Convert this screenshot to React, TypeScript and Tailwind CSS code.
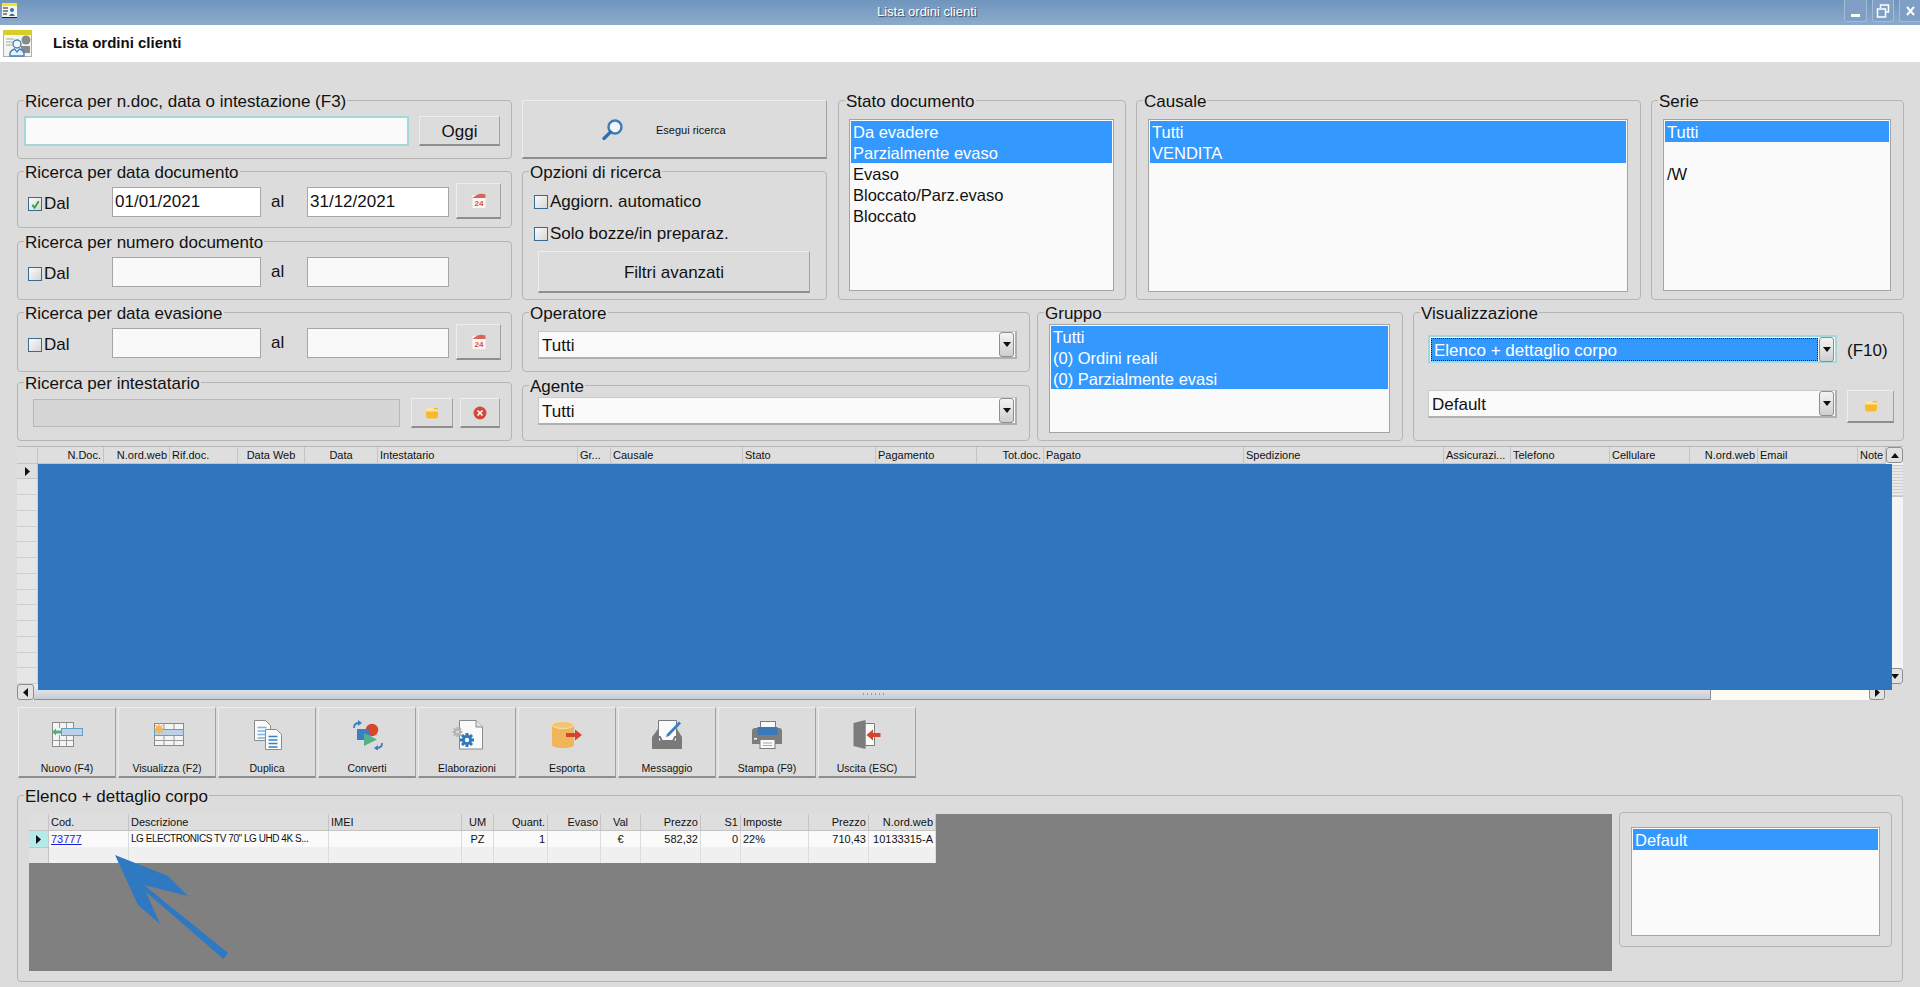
import type { ReactNode } from 'react'

const raised = 'border-t border-l border-r border-b-2 border-t-[#eeeeee] border-l-[#eeeeee] border-r-[#a2a2a2] border-b-[#8e8e8e] bg-[#dcdcdc]'

function Group({ title, className, children }: { title: string; className: string; children: ReactNode }) {
  return (
    <div className={`rounded-[4px] border border-[#b4b4b4] ${className}`}>
      <div className="-mt-[11px] ml-[6px] h-[20px] w-fit bg-[#dcdcdc] px-px text-[17px] leading-[24px]">{title}</div>
      {children}
    </div>
  )
}

function CheckBox({ checked }: { checked?: boolean }) {
  return (
    <span className="flex size-[14px] shrink-0 items-center justify-center border border-[#3b6a8f] bg-gradient-to-br from-[#fbfbfb] to-[#d6d6d6]">
      {checked && (
        <svg viewBox="0 0 12 12" className="size-[11px]">
          <path d="M2.5 6.5 L5 9.5 L9.5 2.5" fill="none" stroke="#2f9e44" strokeWidth="2" />
        </svg>
      )}
    </span>
  )
}

function CalendarIcon() {
  return (
    <svg viewBox="0 0 16 16" className="size-[16px]">
      <rect x="1.5" y="2" width="13" height="13" fill="#fdf6f2" />
      <path d="M1.5 5 Q8 -1 14.5 1.5 V5 Z" fill="#d9655a" />
      <text x="8" y="13" textAnchor="middle" fontSize="8" fontWeight="700" fill="#d9503f" fontFamily="Liberation Sans">24</text>
    </svg>
  )
}

function FolderIcon() {
  return (
    <svg viewBox="0 0 14 12" className="h-[12px] w-[14px]">
      <path d="M1 1 H13 V8.5 Q13 11.5 10 11.5 H4 Q1 11.5 1 8.5 Z" fill="#f9b92b" />
      <path d="M1 1 H8 L9.5 2.5 H13 V4.5 H1 Z" fill="#fbe6a8" />
    </svg>
  )
}

function CancelIcon() {
  return (
    <svg viewBox="0 0 14 14" className="size-[14px]">
      <circle cx="7" cy="7" r="6.5" fill="#cf4a38" />
      <path d="M4.5 4.5 L9.5 9.5 M9.5 4.5 L4.5 9.5" stroke="#fff" strokeWidth="1.6" />
    </svg>
  )
}

function SearchIcon() {
  return (
    <svg viewBox="0 0 22 21" className="h-[21px] w-[22px]">
      <circle cx="13" cy="8" r="6.5" fill="#f3f6f8" stroke="#3a7db9" strokeWidth="2.4" />
      <path d="M8.5 13 L2 19.5" stroke="#2f6ea8" strokeWidth="3.2" strokeLinecap="round" />
    </svg>
  )
}

function ListBox({ items, selected, className }: { items: string[]; selected: number; className: string }) {
  return (
    <div className={`border border-[#a4a4a4] bg-[#fafafa] p-px ${className}`}>
      {items.map((item, i) => (
        <div key={i} className={`h-[21px] pl-[2px] text-[16.5px] leading-[23px] ${i < selected ? 'bg-[#3399ff] text-white' : ''}`}>
          {item}
        </div>
      ))}
    </div>
  )
}

function Combo({ text, className }: { text: string; className: string }) {
  return (
    <div className={`flex h-[28px] items-center justify-between border border-b-2 border-r-2 border-[#b0b0b0] border-t-[#c8c8c8] border-l-[#c8c8c8] bg-[#fafafa] pl-[3px] pr-px text-[17px] ${className}`}>
      <span className="pt-[3px]">{text}</span>
      <DropButton />
    </div>
  )
}

function DropButton() {
  return (
    <span className="flex h-[25px] w-[15px] shrink-0 items-center justify-center rounded-[3px] border border-[#8e8e8e] bg-gradient-to-b from-[#f4f4f4] to-[#cfcfcf]">
      <svg viewBox="0 0 8 5" className="h-[5px] w-[8px]"><path d="M0 0 H8 L4 5 Z" fill="#111" /></svg>
    </span>
  )
}

function DateGroup({ title, className, checked, from, to, cal }: { title: string; className: string; checked?: boolean; from?: string; to?: string; cal?: boolean }) {
  const field = `mt-[6px] h-[30px] shrink-0 border border-[#a6a6a6] pl-[2px] text-[17px] leading-[28px] ${from ? 'bg-white' : 'bg-[#f9f9f9]'}`
  return (
    <Group title={title} className={className}>
      <div className="flex items-start pl-[10px]">
        <div className="mt-[16px]"><CheckBox checked={checked} /></div>
        <span className="ml-[2px] mt-[13px] w-[68px] text-[17px] leading-[20px]">Dal</span>
        <div className={`${field} w-[149px]`}>{from}</div>
        <span className="mt-[11px] w-[46px] pl-[10px] text-[17px] leading-[20px]">al</span>
        <div className={`${field} w-[142px]`}>{to}</div>
        {cal && (
          <button className={`${raised} ml-[7px] mt-[2px] flex h-[36px] w-[45px] items-center justify-center`}><CalendarIcon /></button>
        )}
      </div>
    </Group>
  )
}

function IconNuovo() {
  return (
    <svg viewBox="0 0 36 30" className="h-[30px] w-[36px]">
      <rect x="3.5" y="2.5" width="21" height="24" fill="#f4f4f4" stroke="#8a8a8a" />
      <path d="M10.5 2.5 V8 M17.5 2.5 V8 M10.5 15 V26.5 M17.5 15 V26.5 M3.5 20.5 H24.5" stroke="#9a9a9a" fill="none" />
      <rect x="12.5" y="8.5" width="21" height="7" fill="#bcd0e6" stroke="#5fa0c9" />
      <path d="M3 12 L7 8.5 V10.5 H12 V13.5 H7 V15.5 Z" fill="#55ad85" />
    </svg>
  )
}

function IconVisualizza() {
  return (
    <svg viewBox="0 0 36 30" className="h-[30px] w-[36px]">
      <rect x="5.5" y="3.5" width="29" height="22" fill="#f4f4f4" stroke="#8a8a8a" />
      <path d="M15 3.5 V9 M25 3.5 V9 M15 15 V25.5 M25 15 V25.5 M5.5 20.5 H34.5" stroke="#9a9a9a" fill="none" />
      <rect x="5.5" y="9.5" width="29" height="6" fill="#bcd0e6" stroke="#5fa0c9" />
      <circle cx="10" cy="9" r="3.2" fill="#f3c26b" />
      <path d="M10 3.5 V14.5 M4.5 9 H15.5 M6.2 5.2 L13.8 12.8 M13.8 5.2 L6.2 12.8" stroke="#f3b24d" strokeWidth="1.2" />
    </svg>
  )
}

function IconDuplica() {
  const doc = (x: number, y: number, w: number, h: number, c: string) => (
    <g>
      <path d={`M${x} ${y} H${x + w - 5} L${x + w} ${y + 5} V${y + h} H${x} Z`} fill="#fafafa" stroke="#8a8a8a" />
      <path d={`M${x + 3} ${y + 7} H${x + w - 4} M${x + 3} ${y + 10.5} H${x + w - 4} M${x + 3} ${y + 14} H${x + w - 4} M${x + 3} ${y + 17.5} H${x + w - 4}`} stroke={c} strokeWidth="1.4" />
    </g>
  )
  return (
    <svg viewBox="0 0 36 30" className="h-[30px] w-[36px]">
      {doc(5.5, 0.5, 16, 20, '#79b4e4')}
      {doc(16.5, 9.5, 16, 20, '#3f7fbe')}
    </svg>
  )
}

function IconConverti() {
  return (
    <svg viewBox="0 0 36 30" className="h-[30px] w-[36px]">
      <circle cx="23" cy="10" r="6.2" fill="#d9472b" />
      <rect x="8" y="9" width="12" height="11" fill="#3a7fc1" />
      <path d="M15 13 L28 19.5 L15 26 Z" fill="#55b08c" />
      <path d="M5 8 C5 4.5 7 3 10 3" fill="none" stroke="#3a7fc1" strokeWidth="1.8" />
      <path d="M9 0 L13 3 L9 6 Z" fill="#3a7fc1" />
      <path d="M33 23 C33 26.5 31 28 28 28" fill="none" stroke="#3a7fc1" strokeWidth="1.8" />
      <path d="M29 25 L25 28 L29 31 Z" fill="#3a7fc1" />
    </svg>
  )
}

const gearTeeth = 'M0 -7 V7 M-7 0 H7 M-5 -5 L5 5 M5 -5 L-5 5'

function IconElaborazioni() {
  return (
    <svg viewBox="0 0 36 30" className="h-[30px] w-[36px]">
      <path d="M10.5 0.5 H27 L33.5 7 V29 H10.5 Z" fill="#fafafa" stroke="#8a8a8a" />
      <path d="M27 0.5 V7 H33.5" fill="#e4e4e4" stroke="#8a8a8a" />
      <g transform="translate(8.5 12) scale(0.72)">
        <path d={gearTeeth} stroke="#b4b4b4" strokeWidth="3" />
        <circle r="4.5" fill="#b4b4b4" /><circle r="2" fill="#dcdcdc" />
      </g>
      <g transform="translate(18 20)">
        <path d={gearTeeth} stroke="#2f78bd" strokeWidth="3" />
        <circle r="5" fill="#2f78bd" /><circle r="2.2" fill="#fafafa" />
      </g>
    </svg>
  )
}

function IconEsporta() {
  return (
    <svg viewBox="0 0 36 30" className="h-[30px] w-[36px]">
      <path d="M3 5 V25 C3 29 25 29 25 25 V5 Z" fill="#f0b558" />
      <ellipse cx="14" cy="5" rx="11" ry="3.5" fill="#f3c478" stroke="#f8e0b0" />
      <path d="M17 13 H26 V9.5 L33 15 L26 20.5 V17 H17 Z" fill="#d2452e" />
    </svg>
  )
}

function IconMessaggio() {
  return (
    <svg viewBox="0 0 36 30" className="h-[30px] w-[36px]">
      <path d="M9 9 L3 17 V29 H33 V17 L28 9 Z" fill="#7a7a7a" />
      <path d="M9.5 0.5 H27.5 V21 H9.5 Z" fill="#fafafa" stroke="#7a7a7a" />
      <path d="M5.5 17 H11 L13 21 H24 L26 17 H30.5" fill="none" stroke="#7a7a7a" strokeWidth="2" />
      <path d="M18 14 L30 1.5 L32 3.5 L20 16 L17 17 Z" fill="#3a80c4" />
    </svg>
  )
}

function IconStampa() {
  return (
    <svg viewBox="0 0 36 30" className="h-[30px] w-[36px]">
      <rect x="11.5" y="1.5" width="15" height="7" fill="#fafafa" stroke="#7c7c7c" />
      <path d="M3 11 Q3 8 6 8 H30 Q33 8 33 11 V24 H3 Z" fill="#7c7c7c" />
      <rect x="8.5" y="7" width="20" height="8" fill="#3a78b8" />
      <rect x="11" y="19.5" width="15" height="9" fill="#fafafa" stroke="#7c7c7c" />
      <path d="M14 23 H23 M14 25.5 H23" stroke="#a8a8a8" />
      <rect x="5" y="18" width="3" height="1.5" fill="#fafafa" />
    </svg>
  )
}

function IconUscita() {
  return (
    <svg viewBox="0 0 36 30" className="h-[30px] w-[36px]">
      <path d="M16 3.5 H25.5 V25.5 H16 Z" fill="#fafafa" stroke="#7c7c7c" />
      <path d="M4.5 3 L16.5 0 V29 L4.5 26 Z" fill="#7c7c7c" />
      <path d="M17.5 15 L24 9.5 V13 H31.5 V17 H24 V20.5 Z" fill="#d2452e" />
    </svg>
  )
}

const tools = [
  { label: 'Nuovo (F4)', icon: <IconNuovo /> },
  { label: 'Visualizza (F2)', icon: <IconVisualizza /> },
  { label: 'Duplica', icon: <IconDuplica /> },
  { label: 'Converti', icon: <IconConverti /> },
  { label: 'Elaborazioni', icon: <IconElaborazioni /> },
  { label: 'Esporta', icon: <IconEsporta /> },
  { label: 'Messaggio', icon: <IconMessaggio /> },
  { label: 'Stampa (F9)', icon: <IconStampa /> },
  { label: 'Uscita (ESC)', icon: <IconUscita /> },
]

const mainColumns = [
  { label: 'N.Doc.', cls: 'w-[66px] text-right' },
  { label: 'N.ord.web', cls: 'w-[66px] text-right' },
  { label: 'Rif.doc.', cls: 'w-[68px]' },
  { label: 'Data Web', cls: 'w-[67px] text-center' },
  { label: 'Data', cls: 'w-[73px] text-center' },
  { label: 'Intestatario', cls: 'w-[200px]' },
  { label: 'Gr...', cls: 'w-[33px]' },
  { label: 'Causale', cls: 'w-[132px]' },
  { label: 'Stato', cls: 'w-[133px]' },
  { label: 'Pagamento', cls: 'w-[101px]' },
  { label: 'Tot.doc.', cls: 'w-[67px] text-right' },
  { label: 'Pagato', cls: 'w-[200px]' },
  { label: 'Spedizione', cls: 'w-[200px]' },
  { label: 'Assicurazi...', cls: 'w-[67px]' },
  { label: 'Telefono', cls: 'w-[99px]' },
  { label: 'Cellulare', cls: 'w-[80px]' },
  { label: 'N.ord.web', cls: 'w-[68px] text-right' },
  { label: 'Email', cls: 'w-[100px]' },
  { label: 'Note', cls: 'w-[28px]' },
]

const bodyColumns = [
  { label: 'Cod.', value: '73777', cls: 'w-[80px]' },
  { label: 'Descrizione', value: 'LG ELECTRONICS TV 70" LG UHD 4K S...', cls: 'w-[200px]', valueCls: 'text-[10px] tracking-[-0.45px]' },
  { label: 'IMEI', value: '', cls: 'w-[133px]' },
  { label: 'UM', value: 'PZ', cls: 'w-[32px] text-center' },
  { label: 'Quant.', value: '1', cls: 'w-[54px] text-right' },
  { label: 'Evaso', value: '', cls: 'w-[53px] text-right' },
  { label: 'Val', value: '€', cls: 'w-[40px] text-center' },
  { label: 'Prezzo', value: '582,32', cls: 'w-[60px] text-right' },
  { label: 'S1', value: '0', cls: 'w-[40px] text-right' },
  { label: 'Imposte', value: '22%', cls: 'w-[68px]' },
  { label: 'Prezzo', value: '710,43', cls: 'w-[60px] text-right' },
  { label: 'N.ord.web', value: '10133315-A', cls: 'w-[67px] text-right' },
]

function Triangle() {
  return <svg viewBox="0 0 5 9" className="h-[9px] w-[5px]"><path d="M0 0 L5 4.5 L0 9 Z" fill="#111" /></svg>
}

export default function App() {
  return (
    <div className="flex h-[987px] w-[1920px] flex-col overflow-hidden bg-[#dcdcdc] font-['Liberation_Sans',Arial,sans-serif] text-[#111]">
      {/* title bar */}
      <div className="flex h-[25px] shrink-0 items-start bg-gradient-to-b from-[#6f95bd] to-[#8dabcc]">
        <svg viewBox="0 0 15 15" className="ml-[2px] mt-[3px] size-[15px]">
          <rect width="15" height="15" fill="#f4f4f4" />
          <rect width="15" height="3" fill="#f2e51c" />
          <path d="M1 5 H6 M1 8 H6 M1 11 H5 M0 14.5 H15" stroke="#222" />
          <circle cx="10" cy="7" r="2" fill="#2f7a9a" />
          <path d="M7 13 Q10 8 13 13 Z" fill="#2f7a9a" />
        </svg>
        <span className="ml-[860px] mt-[4px] text-[13px] leading-[16px] text-white [text-shadow:1px_1px_1px_#33475e]">Lista ordini clienti</span>
        <div className="ml-auto flex gap-[5px]">
          <span className="flex h-[22px] w-[23px] items-end justify-center rounded-b-[3px] border border-t-0 border-[#a4bcd6] bg-[#7f9fc4] pb-[4px]"><span className="h-[3px] w-[9px] bg-white" /></span>
          <span className="flex h-[22px] w-[22px] items-center justify-center rounded-b-[3px] border border-t-0 border-[#a4bcd6] bg-[#7f9fc4]">
            <svg viewBox="0 0 14 14" className="size-[14px]"><path d="M4.5 4 V1 H12.5 V8 H10 M1.5 5 H9.5 V13 H1.5 Z" fill="none" stroke="#fff" strokeWidth="1.5" /></svg>
          </span>
          <span className="flex h-[22px] w-[21px] items-center justify-center rounded-bl-[3px] border border-t-0 border-r-0 border-[#a4bcd6] bg-[#7f9fc4]">
            <svg viewBox="0 0 9 10" className="h-[10px] w-[9px]"><path d="M1 1 L8 9 M8 1 L1 9" stroke="#fff" strokeWidth="2" /></svg>
          </span>
        </div>
      </div>

      {/* header */}
      <div className="flex h-[37px] shrink-0 items-center bg-white">
        <svg viewBox="0 0 29 27" className="-mt-[1px] ml-[3px] h-[27px] w-[29px]">
          <rect x="0.5" y="0.5" width="28" height="26" fill="#f6f6f0" stroke="#b0b0b0" />
          <rect width="29" height="5" fill="#d8ce2a" />
          <path d="M3 9 H11 M3 12 H10 M3 15 H9" stroke="#a8a8a8" />
          <circle cx="23" cy="10" r="4.5" fill="#8a8a8a" />
          <path d="M18 23 V16 H27 V23 Z" fill="#8a8a8a" />
          <circle cx="14" cy="14" r="4" fill="#f6f6f0" stroke="#3c83c4" strokeWidth="1.4" />
          <path d="M7 26 V23 Q8 20 11.5 19 L14 22 L16.5 19 Q20 20 21 23 V26 Z" fill="#eaf2f8" stroke="#3c83c4" strokeWidth="1.4" />
        </svg>
        <span className="ml-[21px] text-[15px] font-bold">Lista ordini clienti</span>
      </div>

      {/* search panels */}
      <div className="flex shrink-0 pl-[17px] pt-[38px]">
        <div className="flex w-[495px] flex-col">
          <Group title="Ricerca per n.doc, data o intestazione (F3)" className="h-[59px]">
            <div className="flex pl-[6px] pt-[6px]">
              <div className="h-[30px] w-[385px] border-2 border-[#a5d7d9] bg-[#fafafa]" />
              <button className={`${raised} ml-[10px] h-[30px] w-[81px] pt-[2px] text-[17px]`}>Oggi</button>
            </div>
          </Group>
          <DateGroup title="Ricerca per data documento" className="mt-[12px] h-[57px]" checked from="01/01/2021" to="31/12/2021" cal />
          <DateGroup title="Ricerca per numero documento" className="mt-[13px] h-[59px]" />
          <DateGroup title="Ricerca per data evasione" className="mt-[12px] h-[60px]" cal />
          <Group title="Ricerca per intestatario" className="mt-[10px] h-[59px]">
            <div className="flex items-start pl-[15px]">
              <div className="mt-[7px] h-[28px] w-[367px] border border-[#b8b8b8] bg-[#d6d6d6]" />
              <button className={`${raised} ml-[11px] mt-[6px] flex h-[30px] w-[42px] items-center justify-center`}><FolderIcon /></button>
              <button className={`${raised} ml-[7px] mt-[6px] flex h-[30px] w-[40px] items-center justify-center`}><CancelIcon /></button>
            </div>
          </Group>
        </div>

        <div className="ml-[10px] flex w-[1382px] flex-col">
          <div className="flex h-[200px]">
            <div className="flex w-[305px] flex-col">
              <button className={`${raised} flex h-[59px] shrink-0 items-center pl-[79px]`}>
                <SearchIcon />
                <span className="ml-[32px] mt-[3px] text-[11px]">Esegui ricerca</span>
              </button>
              <Group title="Opzioni di ricerca" className="mt-[12px] h-[129px]">
                <div className="flex flex-col pl-[11px]">
                  <div className="mt-[11px] flex h-[20px] items-center gap-[2px] text-[17px]"><CheckBox />Aggiorn. automatico</div>
                  <div className="mt-[12px] flex h-[20px] items-center gap-[2px] text-[17px]"><CheckBox />Solo bozze/in preparaz.</div>
                  <button className={`${raised} ml-[4px] mt-[7px] h-[42px] w-[272px] pt-[2px] text-[17px]`}>Filtri avanzati</button>
                </div>
              </Group>
            </div>
            <Group title="Stato documento" className="ml-[11px] h-[200px] w-[288px]">
              <div className="pl-[10px] pt-[9px]">
                <ListBox items={['Da evadere', 'Parzialmente evaso', 'Evaso', 'Bloccato/Parz.evaso', 'Bloccato']} selected={2} className="h-[172px] w-[265px]" />
              </div>
            </Group>
            <Group title="Causale" className="ml-[10px] h-[200px] w-[505px]">
              <div className="pl-[11px] pt-[9px]">
                <ListBox items={['Tutti', 'VENDITA']} selected={2} className="h-[173px] w-[480px]" />
              </div>
            </Group>
            <Group title="Serie" className="ml-[10px] h-[200px] w-[253px]">
              <div className="pl-[11px] pt-[9px]">
                <ListBox items={['Tutti', '', '/W']} selected={1} className="h-[172px] w-[228px]" />
              </div>
            </Group>
          </div>

          <div className="mt-[12px] flex h-[129px]">
            <div className="flex w-[508px] flex-col">
              <Group title="Operatore" className="h-[60px]">
                <div className="pl-[15px] pt-[9px]"><Combo text="Tutti" className="w-[479px]" /></div>
              </Group>
              <Group title="Agente" className="mt-[13px] h-[56px]">
                <div className="pl-[15px] pt-[2px]"><Combo text="Tutti" className="w-[479px]" /></div>
              </Group>
            </div>
            <Group title="Gruppo" className="ml-[7px] h-[129px] w-[366px]">
              <div className="pl-[11px] pt-[2px]">
                <ListBox items={['Tutti', '(0) Ordini reali', '(0) Parzialmente evasi']} selected={3} className="h-[109px] w-[341px]" />
              </div>
            </Group>
            <Group title="Visualizzazione" className="ml-[10px] h-[129px] w-[491px]">
              <div className="flex flex-col pl-[14px]">
                <div className="mt-[13px] flex items-center">
                  <div className="flex h-[28px] w-[409px] items-center justify-between border-2 border-[#a5d7d9] bg-[#fafafa] pl-[1px] pr-px">
                    <span className="flex h-[23px] w-[387px] items-center border border-dotted border-[#0b2a4a] bg-[#3399ff] pl-[2px] pt-[2px] text-[17px] text-white">Elenco + dettaglio corpo</span>
                    <DropButton />
                  </div>
                  <span className="ml-[10px] pt-[3px] text-[17px]">(F10)</span>
                </div>
                <div className="mt-[26px] flex items-start">
                  <Combo text="Default" className="w-[409px]" />
                  <button className={`${raised} ml-[10px] flex h-[33px] w-[47px] items-center justify-center`}><FolderIcon /></button>
                </div>
              </div>
            </Group>
          </div>
        </div>
      </div>

      {/* orders grid */}
      <div className="relative ml-[17px] mt-[5px] flex h-[254px] w-[1886px] shrink-0 flex-col border-t border-[#b8b8b8]">
        <div className="flex h-[237px]">
          <div className="flex w-[21px] shrink-0 flex-col bg-[#dedede]">
            <div className="h-[17px] border-b border-r border-[#c4c4c4]" />
            <div className="flex h-[16px] items-center justify-center border-b border-r border-[#c4c4c4]"><Triangle /></div>
            {Array.from({ length: 13 }).map((_, i) => (
              <div key={i} className="h-[16px] border-b border-r border-[#d0d0d0] bg-[#e6e6e6]" />
            ))}
          </div>
          <div className="flex h-[17px] w-[1848px] shrink-0 bg-[#dedede]">
            {mainColumns.map((col, i) => (
              <div key={i} className={`h-[17px] shrink-0 overflow-hidden whitespace-nowrap border-b border-r border-[#c4c4c4] px-[2px] text-[11px] leading-[16px] ${col.cls}`}>
                {col.label}
              </div>
            ))}
          </div>
          <div className="flex w-[17px] shrink-0 flex-col items-center bg-[#f4f4f4]">
            <span className="flex h-[16px] w-[17px] shrink-0 items-center justify-center rounded-[3px] border border-[#8e8e8e] bg-[#e2e2e2]"><svg viewBox="0 0 8 5" className="h-[5px] w-[8px]"><path d="M0 5 H8 L4 0 Z" fill="#111" /></svg></span>
            <div className="flex-1 self-stretch pt-[2px]">
              <div className="h-[32px] border-y border-[#c8c8c8] bg-[#e8e8e8] bg-[repeating-linear-gradient(0deg,#cfcfcf_0_1px,transparent_1px_3px)]" />
            </div>
            <span className="flex h-[16px] w-[17px] shrink-0 items-center justify-center rounded-[3px] border border-[#8e8e8e] bg-[#e2e2e2]"><svg viewBox="0 0 8 5" className="h-[5px] w-[8px]"><path d="M0 0 H8 L4 5 Z" fill="#111" /></svg></span>
          </div>
        </div>
        <div className="flex h-[16px] w-[1868px]">
          <span className="flex w-[17px] shrink-0 items-center justify-center rounded-[3px] border border-[#8e8e8e] bg-[#e2e2e2]"><svg viewBox="0 0 5 9" className="h-[9px] w-[5px]"><path d="M5 0 L0 4.5 L5 9 Z" fill="#111" /></svg></span>
          <div className="relative w-[1677px] shrink-0 border-b border-r border-[#8e8e8e] bg-gradient-to-b from-[#eef0f3] to-[#c6cbd6]">
            <span className="absolute bottom-[4px] left-[829px] h-[2px] w-[22px] bg-[repeating-linear-gradient(90deg,#9a9a9a_0_1px,transparent_1px_4px)]" />
          </div>
          <div className="w-[158px] shrink-0 bg-[#fdfdf5]" />
          <span className="flex w-[16px] shrink-0 items-center justify-center rounded-[3px] border border-[#8e8e8e] bg-[#e2e2e2]"><Triangle /></span>
        </div>
        {/* blue annotation block over the grid */}
        <div className="absolute left-[21px] top-[17px] h-[226px] w-[1854px] bg-[#2f76bf]" />
      </div>

      {/* toolbar */}
      <div className="ml-[18px] mt-[7px] flex shrink-0 gap-[2px]">
        {tools.map((tool) => (
          <button key={tool.label} className={`${raised} flex h-[71px] w-[98px] flex-col items-center pt-[12px]`}>
            {tool.icon}
            <span className="mt-[10px] text-[10.5px] leading-[16px]">{tool.label}</span>
          </button>
        ))}
      </div>

      {/* detail */}
      <Group title="Elenco + dettaglio corpo" className="ml-[17px] mt-[17px] h-[187px] w-[1886px] shrink-0">
        <div className="flex items-start pl-[11px]">
          <div className="relative mt-[9px] h-[157px] w-[1583px] shrink-0 bg-[#808080]">
            <div className="flex h-[17px] w-[906px] bg-[#dedede]">
              <div className="w-[20px] shrink-0 border-b border-r border-[#c4c4c4]" />
              {bodyColumns.map((col, i) => (
                <div key={i} className={`shrink-0 overflow-hidden whitespace-nowrap border-b border-r border-[#c4c4c4] px-[2px] text-[11px] leading-[17px] ${col.cls}`}>{col.label}</div>
              ))}
            </div>
            <div className="flex h-[16px] w-[906px] bg-[#fafafa]">
              <div className="flex w-[20px] shrink-0 items-center justify-center border-r border-[#c4c4c4] bg-[#b5eaea]"><Triangle /></div>
              {bodyColumns.map((col, i) => (
                <div key={i} className={`shrink-0 overflow-hidden whitespace-nowrap border-r border-[#dcdcdc] px-[2px] leading-[16px] ${col.valueCls ?? 'text-[11px]'} ${col.cls}`}>
                  {i === 0 ? <span className="text-[#1a1ae0] underline">{col.value}</span> : col.value}
                </div>
              ))}
            </div>
            <div className="flex h-[16px] w-[906px] bg-[#f0f0f0]">
              <div className="w-[20px] shrink-0 border-r border-t border-[#c4c4c4] bg-[#e2e2e2]" />
              {bodyColumns.map((col, i) => (
                <div key={i} className={`shrink-0 border-r border-[#dcdcdc] ${col.cls}`} />
              ))}
            </div>
            {/* blue arrow annotation */}
            <svg viewBox="0 0 125 115" className="absolute left-[80px] top-[35px] h-[115px] w-[125px]">
              <path d="M6 6 L59 27 L79 47 L35 36 L119 104 L114.5 110 L37 43 L51 75 L29 56 Z" fill="#2f78c2" />
            </svg>
          </div>
          <div className="ml-[7px] mt-[7px] h-[135px] w-[273px] rounded-[4px] border border-[#b4b4b4] pl-[11px] pt-[14px]">
            <ListBox items={['Default']} selected={1} className="h-[109px] w-[249px]" />
          </div>
        </div>
      </Group>
    </div>
  )
}
